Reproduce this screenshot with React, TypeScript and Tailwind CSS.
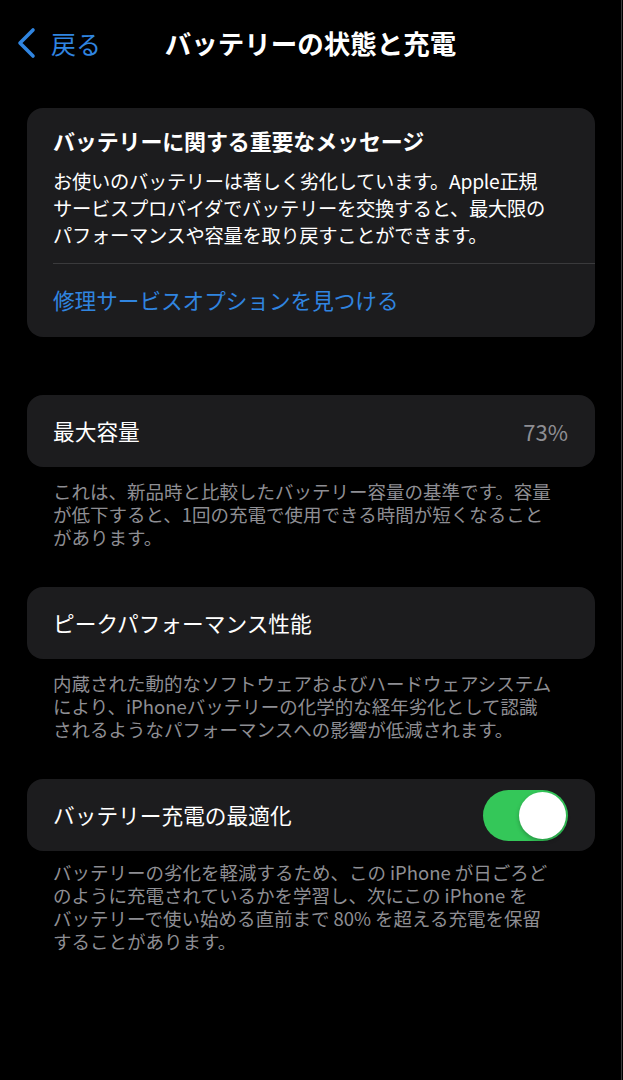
import React from 'react'

const FONT = { fontFamily: '"Noto Sans CJK JP", "Noto Sans", sans-serif' }

function Footer({ lines }: { lines: React.ReactNode[] }) {
  return (
    <p className="px-[26px] text-[18.5px] leading-[23px] text-[#8e8e93] whitespace-nowrap">
      {lines.map((l, i) => (
        <React.Fragment key={i}>
          {l}
          {i < lines.length - 1 && <br />}
        </React.Fragment>
      ))}
    </p>
  )
}

function W({ children }: { children: React.ReactNode }) {
  return <span className="mx-[4px]">{children}</span>
}

function Row({ children }: { children: React.ReactNode }) {
  return (
    <div className="h-[72px] rounded-[16px] bg-[#1c1c1e] flex items-center justify-between pl-[26px] pr-[27px]">
      {children}
    </div>
  )
}

function Toggle() {
  return (
    <div className="w-[85px] h-[51px] rounded-full bg-[#34c759] flex items-center justify-end pr-[2px]">
      <div className="w-[47px] h-[47px] rounded-full bg-white shadow-[0_2px_4px_rgba(0,0,0,0.25)]" />
    </div>
  )
}

export default function App() {
  return (
    <div className="w-[623px] h-[1080px] bg-black" style={FONT}>
      <div className="w-[622px] h-[1080px] border-r border-[#3a3a3c] text-white">
        {/* nav bar */}
        <div className="h-[86px] grid grid-cols-[1fr_auto_1fr] items-center">
          <div className="flex items-center pl-[15px] gap-[14px] text-[#3085e0]">
            <svg width="22" height="32" viewBox="0 0 22 32" fill="none">
              <path d="M18 3 L5 16 L18 29" stroke="#3085e0" strokeWidth="3.6" strokeLinecap="round" strokeLinejoin="round" />
            </svg>
            <span className="text-[25px] leading-none">戻る</span>
          </div>
          <h1 className="text-[26.5px] font-bold leading-none">バッテリーの状態と充電</h1>
          <div />
        </div>

        <div className="px-[27px] pr-[26px]">
          {/* message card */}
          <div className="mt-[22px] rounded-[16px] bg-[#1c1c1e] pl-[26px]">
            <h2 className="pt-[17px] text-[22px] font-bold leading-[30px] tracking-[-0.15px]">バッテリーに関する重要なメッセージ</h2>
            <p className="mt-[13px] pr-[26px] text-[19.3px] leading-[27px] tracking-[-0.3px] whitespace-nowrap">
              お使いのバッテリーは著しく劣化しています。Apple正規
              <br />
              サービスプロバイダでバッテリーを交換すると、最大限の
              <br />
              パフォーマンスや容量を取り戻すことができます。
            </p>
            <div className="mt-[14px] h-px bg-[#3a3a3c]" />
            <div className="h-[73px] flex items-center text-[21.6px] text-[#3085e0]">修理サービスオプションを見つける</div>
          </div>

          {/* max capacity */}
          <div className="mt-[58px]">
            <Row>
              <span className="text-[21.7px]">最大容量</span>
              <span className="text-[22px] text-[#8e8e93]">73%</span>
            </Row>
          </div>
          <div className="mt-[13px]">
            <Footer
              lines={[
                'これは、新品時と比較したバッテリー容量の基準です。容量',
                'が低下すると、1回の充電で使用できる時間が短くなること',
                'があります。',
              ]}
            />
          </div>

          {/* peak performance */}
          <div className="mt-[38px]">
            <Row>
              <span className="text-[21.7px]">ピークパフォーマンス性能</span>
            </Row>
          </div>
          <div className="mt-[13px]">
            <Footer
              lines={[
                '内蔵された動的なソフトウェアおよびハードウェアシステム',
                'により、iPhoneバッテリーの化学的な経年劣化として認識',
                'されるようなパフォーマンスへの影響が低減されます。',
              ]}
            />
          </div>

          {/* optimized charging */}
          <div className="mt-[38px]">
            <Row>
              <span className="text-[21.7px]">バッテリー充電の最適化</span>
              <Toggle />
            </Row>
          </div>
          <div className="mt-[10px]">
            <Footer
              lines={[
                <>バッテリーの劣化を軽減するため、この<W>iPhone</W>が日ごろど</>,
                <>のように充電されているかを学習し、次にこの<W>iPhone</W>を</>,
                <>バッテリーで使い始める直前まで<W>80%</W>を超える充電を保留</>,
                'することがあります。',
              ]}
            />
          </div>
        </div>
      </div>
    </div>
  )
}
